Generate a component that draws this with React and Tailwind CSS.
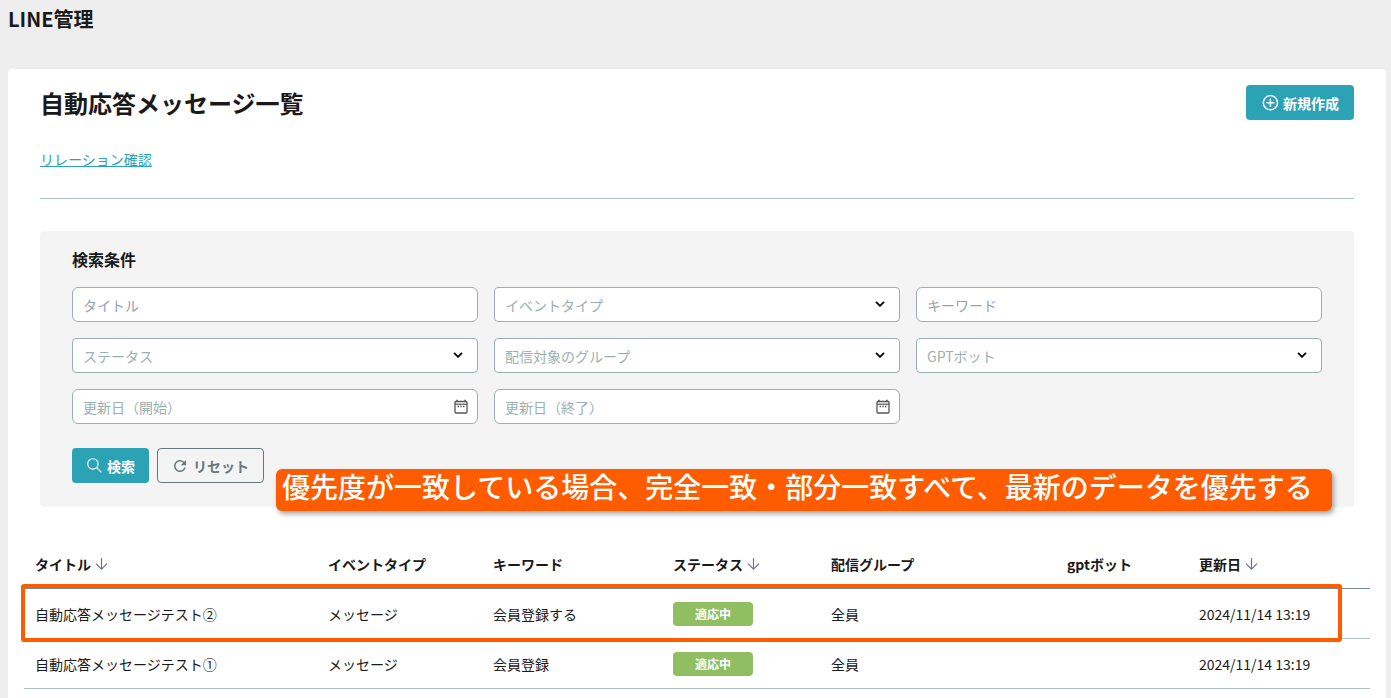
import React from 'react';
import { MdRefresh } from 'react-icons/md';

const columns = [
  { label: 'タイトル', width: 'w-[293px]', sortable: true },
  { label: 'イベントタイプ', width: 'w-[165px]' },
  { label: 'キーワード', width: 'w-[180px]' },
  { label: 'ステータス', width: 'w-[158px]', sortable: true },
  { label: '配信グループ', width: 'w-[236px]' },
  { label: 'gptボット', width: 'w-[132px]' },
  { label: '更新日', width: 'w-[182px]', sortable: true },
];

const rows = [
  { title: '自動応答メッセージテスト②', type: 'メッセージ', keyword: '会員登録する', status: '適応中', group: '全員', bot: '', updated: '2024/11/14 13:19' },
  { title: '自動応答メッセージテスト①', type: 'メッセージ', keyword: '会員登録', status: '適応中', group: '全員', bot: '', updated: '2024/11/14 13:19' },
];

function PlusCircle() {
  return (
    <svg width="18" height="18" viewBox="0 0 18 18" fill="none" stroke="currentColor" strokeWidth="1.4" strokeLinecap="round" className="shrink-0">
      <circle cx="9.4" cy="8.700" r="7.100" />
      <path d="M9.400 5.200v7M5.900 8.700h7" />
    </svg>
  );
}

function SearchIcon() {
  return (
    <svg width="17" height="17" viewBox="0 0 17 17" fill="none" stroke="currentColor" strokeWidth="1.100" strokeLinecap="round" className="shrink-0">
      <circle cx="6.900" cy="6.900" r="5.200" />
      <path d="m10.700 10.700 4.300 4.300" />
    </svg>
  );
}

function ArrowDown() {
  return (
    <svg width="14" height="14" viewBox="0 0 14 14" fill="none" stroke="#6b7280" strokeWidth="1.100" className="shrink-0">
      <path d="M6.500 1v11M1 6.700 6.500 12.200 12 6.700" />
    </svg>
  );
}

function ChevronDown() {
  return (
    <svg width="10" height="6" viewBox="0 0 10 6" fill="none" stroke="#000" strokeWidth="1.8" className="pointer-events-none absolute right-[15px] top-[14px]">
      <path d="M1 .8 5 4.800 9 .8" />
    </svg>
  );
}

function CalendarIcon() {
  return (
    <svg width="14" height="15" viewBox="0 0 14 15" fill="none" stroke="#555" className="pointer-events-none absolute right-[10px] top-[10px]">
      <rect x="1" y="2.500" width="12" height="11.500" rx="1" strokeWidth="1.300" />
      <path d="M1 5.200h12" strokeWidth="1.200" />
      <path d="M3 .700v2M11 .700v2" strokeWidth="1.500" />
      <path d="M3.500 7.500h1.500M6.300 7.500h1.500M9 7.500h1.500" strokeWidth="1.300" />
    </svg>
  );
}

function TextField({ label }) {
  return (
    <input
      type="text"
      aria-label={label}
      placeholder={label}
      className="h-[35px] w-full rounded-md border border-[#9bb0b0] bg-white px-[10px] text-sm text-[#1a1a1a] placeholder:text-gray-400"
    />
  );
}

function SelectField({ label }) {
  return (
    <div className="relative">
      <select
        aria-label={label}
        defaultValue=""
        className="block h-[35px] w-full appearance-none rounded border border-[#9bb0b0] bg-white px-[10px] text-sm text-[#9bb0b0]"
      >
        <option value="">{label}</option>
      </select>
      <ChevronDown />
    </div>
  );
}

function DateField({ label }) {
  return (
    <div className="relative">
      <input
        type="text"
        aria-label={label}
        placeholder={label}
        className="block h-[35px] w-full rounded-md border border-[#9bb0b0] bg-white px-[10px] text-sm text-[#1a1a1a] placeholder:text-[#9bb0b0]"
      />
      <CalendarIcon />
    </div>
  );
}

function Cell({ children }) {
  return <td className="h-[50px] border-b border-[#adc1c1] px-[11px]">{children}</td>;
}

export default function App() {
  return (
    <div className="flex min-h-screen flex-col bg-[#eeeeee] font-['Noto_Sans_CJK_JP',sans-serif] text-sm text-[#1a1a1a]">
      <header className="mb-[31px] px-2">
        <h1 className="text-xl leading-[38px] font-bold">LINE管理</h1>
      </header>

      <main className="mr-[5px] ml-2 flex-1 rounded-t bg-white pt-4">
        <div className="px-8">
          <div className="flex items-center justify-between">
            <h2 className="text-2xl font-bold">自動応答メッセージ一覧</h2>
            <button type="button" className="flex h-[35px] items-center gap-1 rounded bg-[#2ca3b5] px-[15px] font-bold text-white">
              <PlusCircle />
              新規作成
            </button>
          </div>

          <div className="mt-7 border-b border-[#adc1c1] pb-7 leading-[22px]">
            <a href="#relation" className="text-[#2ca3b5] underline">リレーション確認</a>
          </div>

          {/* Search form */}
          <form className="relative mt-8 rounded bg-[#f4f4f4] px-8 pt-3.5 pb-6" onSubmit={e => e.preventDefault()}>
            <h3 className="mb-3.5 text-base leading-7 font-bold">検索条件</h3>
            <div className="grid grid-cols-3 gap-4">
              <TextField label="タイトル" />
              <SelectField label="イベントタイプ" />
              <TextField label="キーワード" />
              <SelectField label="ステータス" />
              <SelectField label="配信対象のグループ" />
              <SelectField label="GPTボット" />
              <DateField label="更新日（開始）" />
              <DateField label="更新日（終了）" />
            </div>
            <div className="mt-6 flex gap-2">
              <button type="submit" className="flex h-[35px] items-center gap-1 rounded bg-[#2ca3b5] px-[14px] font-bold text-white">
                <SearchIcon />
                検索
              </button>
              <button type="reset" className="flex h-[35px] items-center gap-1 rounded border border-[#667a7e] pr-[14px] pl-[13px] font-bold text-[#667a7e]">
                <MdRefresh size={18} />
                リセット
              </button>
            </div>

            {/* Note laid over the form */}
            <p className="absolute right-[22px] -bottom-1 left-[236px] h-[42px] rounded-md bg-[#ff5c00] px-1.5 text-[28px] leading-[34px] font-medium whitespace-nowrap text-white shadow-[2px_3px_5px_rgba(0,0,0,0.35)]">
              優先度が一致している場合、完全一致・部分一致すべて、最新のデータを優先する
            </p>
          </form>
        </div>

        {/* Results */}
        <div className="relative mx-4 mt-8">
          <table className="w-full table-fixed border-separate border-spacing-0 text-left">
            <thead>
              <tr>
                {columns.map(col => (
                  <th key={col.label} scope="col" className={`${col.width} h-[50px] border-b border-[#768e8e] px-[11px] font-bold`}>
                    <div className="flex items-center gap-1">
                      {col.label}
                      {col.sortable && <ArrowDown />}
                    </div>
                  </th>
                ))}
              </tr>
            </thead>
            <tbody>
              {rows.map(row => (
                <tr key={row.title}>
                  <Cell>{row.title}</Cell>
                  <Cell>{row.type}</Cell>
                  <Cell>{row.keyword}</Cell>
                  <Cell>
                    <span className="flex h-6 w-20 items-center justify-center rounded bg-[#8fbf60] text-xs font-bold text-white">{row.status}</span>
                  </Cell>
                  <Cell>{row.group}</Cell>
                  <Cell>{row.bot}</Cell>
                  <Cell>{row.updated}</Cell>
                </tr>
              ))}
            </tbody>
          </table>
          {/* Frame round the first result */}
          <div className="pointer-events-none absolute top-[45px] right-7 -left-[3px] h-[58px] rounded-[3px] border-4 border-[#ff5c00]" />
        </div>
      </main>
    </div>
  );
}
